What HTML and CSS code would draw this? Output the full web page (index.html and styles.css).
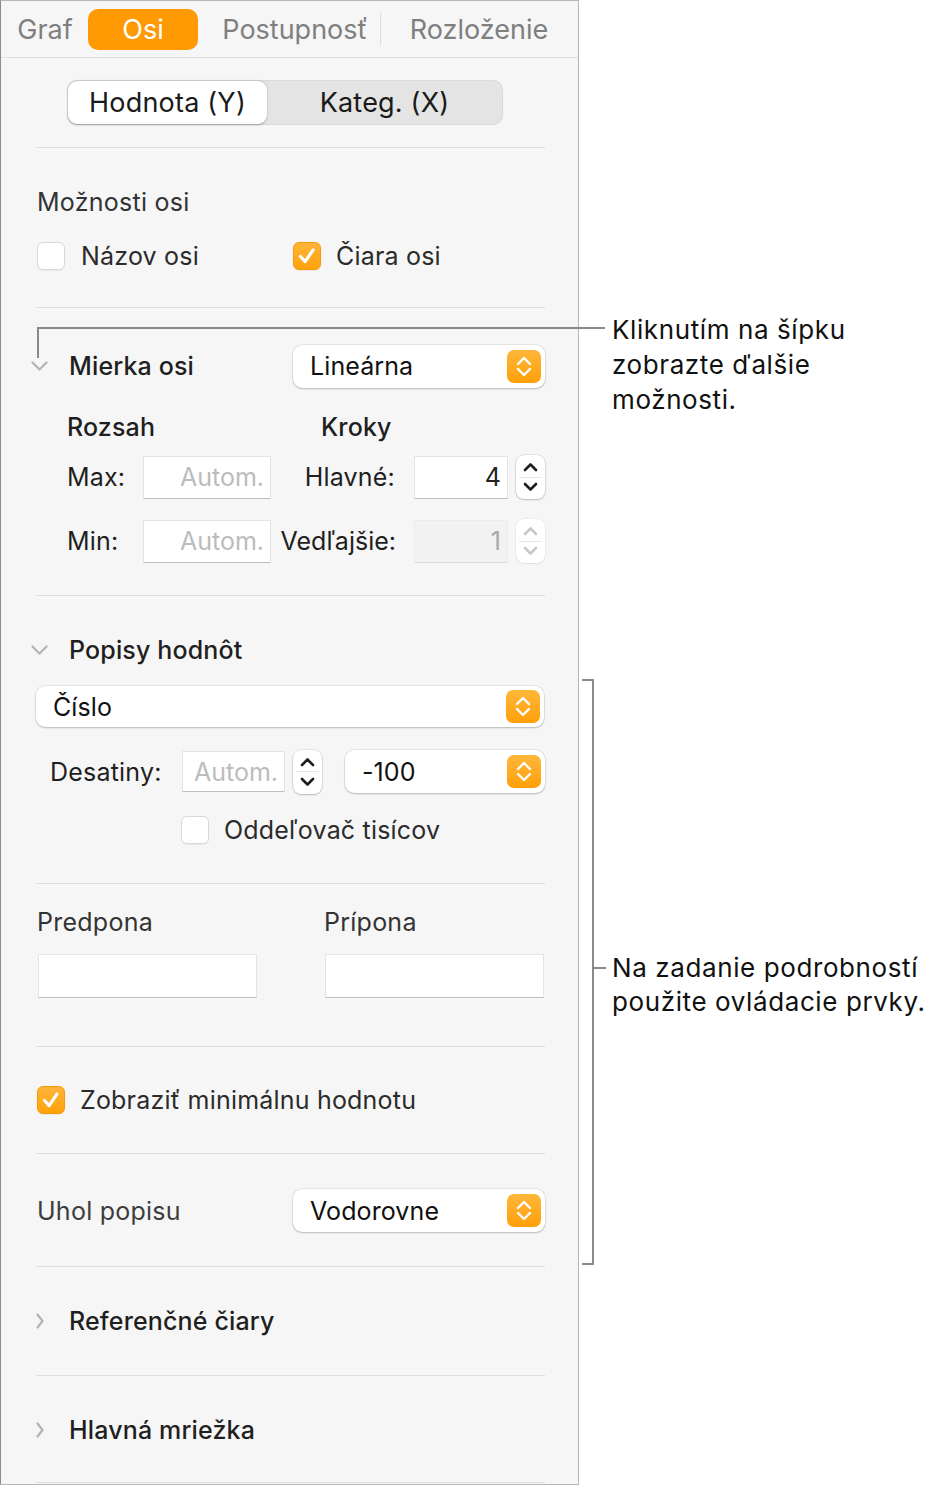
FILE: index.html
```html
<!DOCTYPE html>
<html lang="sk">
<head>
<meta charset="utf-8">
<title>Osi</title>
<link rel="stylesheet" href="styles.css">
</head>
<body>
<div class="page">
  <div class="panel">
    <div class="tabs">
      <div class="tab tab-graf">Graf</div>
      <div class="tab tab-osi active">Osi</div>
      <div class="tab tab-post">Postupnosť</div>
      <div class="tab-sep"></div>
      <div class="tab tab-rozl">Rozloženie</div>
    </div>

    <div class="segmented">
      <div class="seg seg-on">Hodnota (Y)</div>
      <div class="seg seg-off">Kateg. (X)</div>
    </div>

    <div class="content">
      <div class="sep"></div>

      <section class="sec sec-a">
        <div class="row h40 label-reg">Možnosti osi</div>
        <div class="row h40 cb-row">
          <div class="cb-item cb-w1"><span class="cb"></span><span class="cb-label">Názov osi</span></div>
          <div class="cb-item"><span class="cb on"><svg viewBox="0 0 28 28"><path d="M7 14.5 L12 20 L20.5 7.5" /></svg></span><span class="cb-label cb-label2">Čiara osi</span></div>
        </div>
      </section>
      <div class="sep"></div>

      <section class="sec sec-b">
        <div class="row h44">
          <span class="disc"><svg class="chev-down" viewBox="0 0 17 10"><path d="M1.5 1.5 L8.5 8.5 L15.5 1.5"/></svg></span>
          <span class="label-bold">Mierka osi</span>
          <div class="popup popup-252"><span>Lineárna</span><span class="pop-arrow"><svg viewBox="0 0 34 33"><path d="M11 14 L17 8 L23 14 M11 19 L17 25 L23 19"/></svg></span></div>
        </div>
        <div class="row h30 sub-heads">
          <span class="label-bold head-rozsah">Rozsah</span>
          <span class="label-bold">Kroky</span>
        </div>
        <div class="num-grid row-max">
          <span class="lbl">Max:</span>
          <div class="field"><span class="ph">Autom.</span></div>
          <span class="lbl lbl-r">Hlavné:</span>
          <div class="field"><span>4</span></div>
          <span class="stepper"><svg viewBox="0 0 29 44"><path d="M9 15 L14.5 9.5 L20 15 M9 29 L14.5 34.5 L20 29"/></svg></span>
        </div>
        <div class="num-grid row-min">
          <span class="lbl">Min:</span>
          <div class="field"><span class="ph">Autom.</span></div>
          <span class="lbl lbl-r">Vedľajšie:</span>
          <div class="field field-dis"><span>1</span></div>
          <span class="stepper stepper-dis"><svg viewBox="0 0 29 44"><path d="M9 15 L14.5 9.5 L20 15 M9 29 L14.5 34.5 L20 29"/></svg></span>
        </div>
      </section>
      <div class="sep"></div>

      <section class="sec sec-c">
        <div class="row h30">
          <span class="disc"><svg class="chev-down" viewBox="0 0 17 10"><path d="M1.5 1.5 L8.5 8.5 L15.5 1.5"/></svg></span>
          <span class="label-bold">Popisy hodnôt</span>
        </div>
        <div class="popup popup-full"><span>Číslo</span><span class="pop-arrow"><svg viewBox="0 0 34 33"><path d="M11 14 L17 8 L23 14 M11 19 L17 25 L23 19"/></svg></span></div>
        <div class="row dec-row">
          <span class="lbl dec-lbl">Desatiny:</span>
          <div class="field dec-field"><span class="ph">Autom.</span></div>
          <span class="stepper"><svg viewBox="0 0 29 44"><path d="M9 15 L14.5 9.5 L20 15 M9 29 L14.5 34.5 L20 29"/></svg></span>
          <div class="popup popup-200"><span>-100</span><span class="pop-arrow"><svg viewBox="0 0 34 33"><path d="M11 14 L17 8 L23 14 M11 19 L17 25 L23 19"/></svg></span></div>
        </div>
        <div class="row h30 sep-row">
          <span class="cb"></span><span class="cb-label">Oddeľovač tisícov</span>
        </div>
      </section>
      <div class="sep"></div>

      <section class="sec sec-d">
        <div class="pre-grid">
          <span class="label-reg">Predpona</span>
          <span class="label-reg">Prípona</span>
          <div class="field field-wide"></div>
          <div class="field field-wide"></div>
        </div>
      </section>
      <div class="sep"></div>

      <section class="sec sec-e">
        <div class="row h30">
          <span class="cb on"><svg viewBox="0 0 28 28"><path d="M7 14.5 L12 20 L20.5 7.5" /></svg></span><span class="cb-label cb-label3">Zobraziť minimálnu hodnotu</span>
        </div>
      </section>
      <div class="sep"></div>

      <section class="sec sec-f">
        <div class="row h43">
          <span class="label-reg label-uhol">Uhol popisu</span>
          <div class="popup popup-252"><span>Vodorovne</span><span class="pop-arrow"><svg viewBox="0 0 34 33"><path d="M11 14 L17 8 L23 14 M11 19 L17 25 L23 19"/></svg></span></div>
        </div>
      </section>
      <div class="sep"></div>

      <section class="sec sec-g">
        <div class="row h30">
          <span class="disc"><svg class="chev-right" viewBox="0 0 8 16"><path d="M1.5 1.5 L6.5 8 L1.5 14.5"/></svg></span>
          <span class="label-bold">Referenčné čiary</span>
        </div>
      </section>
      <div class="sep"></div>

      <section class="sec sec-h">
        <div class="row h30">
          <span class="disc"><svg class="chev-right" viewBox="0 0 8 16"><path d="M1.5 1.5 L6.5 8 L1.5 14.5"/></svg></span>
          <span class="label-bold">Hlavná mriežka</span>
        </div>
      </section>
      <div class="sep"></div>
    </div>
  </div>

  <div class="callout-line c1-h"></div>
  <div class="callout-line c1-v"></div>
  <div class="callout-text c1-text">Kliknutím na šípku<br>zobrazte ďalšie<br>možnosti.</div>

  <div class="callout-line br-v"></div>
  <div class="callout-line br-top"></div>
  <div class="callout-line br-bot"></div>
  <div class="callout-line br-mid"></div>
  <div class="callout-text c2-text">Na zadanie podrobností<br>použite ovládacie prvky.</div>
</div>
</body>
</html>
```

FILE: styles.css
```css
* { box-sizing: border-box; }
html, body { margin: 0; padding: 0; background: #ffffff; }
body {
  font-family: Inter, "Liberation Sans", sans-serif;
  color: #262626;
  width: 937px;
  height: 1485px;
  overflow: hidden;
}
.page { position: relative; width: 937px; height: 1485px; }

.panel {
  width: 579px;
  height: 1485px;
  background: #f6f6f6;
  border-left: 1px solid #8c8c8c;
  border-right: 1px solid #b8b8b8;
  border-top: 1px solid #b8b8b8;
  border-bottom: 1px solid #b8b8b8;
}

/* tabs */
.tabs {
  height: 57px;
  border-bottom: 1px solid #dedede;
  display: flex;
  align-items: center;
  padding-left: 7px;
}
.tab {
  font-size: 27px;
  color: #7f7f7f;
  text-align: center;
  line-height: 41px;
  height: 41px;
}
.tab-graf { width: 74px; }
.tab-osi { width: 110px; margin-left: 6px; }
.tab-post { width: 170px; margin-left: 12px; }
.tab-rozl { width: 196px; }
.tab.active {
  background: #ff9a05;
  color: #ffffff;
  border-radius: 10px;
}
.tab-sep { width: 1px; height: 32px; background: #dddddd; }

/* segmented control */
.segmented {
  margin: 22px 0 0 66px;
  width: 436px;
  height: 45px;
  background: #e4e4e4;
  border-radius: 10px;
  display: flex;
  padding: 1px;
  box-shadow: inset 0 0 0 1px #dadada;
}
.seg {
  font-size: 27px;
  letter-spacing: 0.2px;
  line-height: 43px;
  text-align: center;
  color: #1a1a1a;
}
.seg-on {
  width: 199px;
  background: #ffffff;
  border-radius: 9px;
  box-shadow: 0 0.5px 2px rgba(0,0,0,0.3);
}
.seg-off { flex: 1; }

/* content */
.content { padding: 22px 33px 0 35px; }
.sep { height: 1px; background: #dddddd; }

.row { display: flex; align-items: center; }
.h30 { height: 30px; }
.h40 { height: 40px; }
.h43 { height: 43px; }
.h44 { height: 44px; }

.label-reg { font-size: 25px; letter-spacing: 0.25px; color: #333333; }
.label-bold { font-size: 25px; letter-spacing: 0.15px; font-weight: 500; color: #1f1f1f; }
.lbl { font-size: 25px; letter-spacing: 0.2px; color: #1f1f1f; }

.sec-a { padding: 34px 0 31px 0; }
.sec-a .row + .row { margin-top: 14px; }
.label-reg.h40 { padding-left: 1px; }

.cb-row { padding-left: 1px; }
.cb-item { display: flex; align-items: center; }
.cb-w1 { width: 256px; }
.cb {
  width: 28px; height: 28px;
  border-radius: 6px;
  background: #ffffff;
  border: 1px solid #d9d9d9;
  box-shadow: 0 0.5px 1px rgba(0,0,0,0.06);
  display: inline-flex;
  align-items: center;
  justify-content: center;
  flex: none;
}
.cb.on {
  background: linear-gradient(#ffb43a, #ffa20a);
  border: 1px solid #f59a00;
}
.cb svg { width: 28px; height: 28px; }
.cb svg path { fill: none; stroke: #ffffff; stroke-width: 3.4; stroke-linecap: round; stroke-linejoin: round; }
.cb-label { font-size: 25px; letter-spacing: 0.2px; color: #2b2b2b; margin-left: 16px; }
.cb-label2 { margin-left: 15px; }
.cb-label3 { margin-left: 15px; }

/* disclosure */
.disc {
  width: 17px;
  margin-left: -5px;
  margin-right: 21px;
  display: inline-flex;
  justify-content: center;
  align-items: center;
}
.chev-down { width: 17px; height: 10px; }
.chev-right { width: 8px; height: 16px; }
.disc path { fill: none; stroke: #b4b4b4; stroke-width: 2.2; stroke-linecap: round; stroke-linejoin: round; }

/* popup */
.popup {
  height: 43px;
  background: #ffffff;
  border-radius: 9px;
  box-shadow: 0 0 0 0.5px rgba(0,0,0,0.12), 0 1px 2px rgba(0,0,0,0.2);
  display: flex;
  align-items: center;
  justify-content: space-between;
  padding: 0 4px 0 17px;
  font-size: 25px;
  letter-spacing: 0.1px;
  color: #111111;
}
.popup-252 { width: 252px; margin-left: auto; }
.popup-200 { width: 200px; margin-left: auto; }
.popup-full { width: 508px; height: 41px; margin-top: 21px; }
.pop-arrow {
  width: 34px; height: 33px;
  border-radius: 7px;
  background: linear-gradient(#ffb73a, #ffa00a);
  display: inline-flex;
}
.pop-arrow svg { width: 34px; height: 33px; }
.pop-arrow path { fill: none; stroke: #ffffff; stroke-width: 2.4; stroke-linecap: round; stroke-linejoin: round; }

/* section b */
.sec-b { padding: 36px 0 33px 0; }
.sub-heads { margin-top: 24px; padding-left: 31px; }
.head-rozsah { width: 254px; }
.num-grid {
  display: grid;
  grid-template-columns: 76px 128px 143px 94px 37px;
  align-items: center;
  margin-left: 31px;
  height: 43px;
}
.num-grid .stepper { margin-left: 8px; }
.row-max { margin-top: 13px; }
.row-min { margin-top: 21px; }
.lbl-r { text-align: right; padding-right: 19px; }
.row-min .lbl-r { padding-right: 18px; letter-spacing: 0; }

.field {
  height: 43px;
  background: #ffffff;
  border: 1px solid #e4e4e4;
  border-bottom: 1px solid #bdbdbd;
  display: flex;
  align-items: center;
  justify-content: flex-end;
  padding-right: 6px;
  font-size: 25px;
  color: #222222;
}
.field .ph { color: #bcbcbc; }
.field-dis { background: #f2f2f2; border-color: #ececec; border-bottom-color: #dddddd; }
.field-dis span { color: #a8a8a8; }

.stepper {
  width: 29px; height: 44px;
  background: #ffffff;
  border-radius: 8px;
  box-shadow: 0 0 0 0.5px rgba(0,0,0,0.15), 0 1px 2px rgba(0,0,0,0.18);
  display: inline-flex;
  position: relative;
}
.stepper::after {
  content: "";
  position: absolute;
  left: 3px; right: 3px; top: 21.5px;
  height: 1px;
  background: #e6e6e6;
}
.stepper svg { width: 29px; height: 44px; }
.stepper path { fill: none; stroke: #1e1e1e; stroke-width: 2.6; stroke-linecap: round; stroke-linejoin: round; }
.stepper-dis { box-shadow: 0 0 0 0.5px rgba(0,0,0,0.08), 0 1px 1px rgba(0,0,0,0.06); }
.stepper-dis path { stroke: #c8c8c8; }

/* section c */
.sec-c { padding: 39px 0 38px 0; }
.dec-row { margin-top: 23px; height: 43px; }
.dec-lbl { margin-left: 14px; width: 132px; }
.dec-field { width: 103px; height: 41px; }
.dec-row .stepper { margin-left: 8px; }
.sep-row { margin-top: 22px; padding-left: 145px; }
.sep-row .cb-label { margin-left: 15px; }

/* section d */
.sec-d { padding: 23px 0 48px 0; }
.pre-grid {
  display: grid;
  grid-template-columns: 287px 221px;
  grid-template-rows: 30px 44px;
  row-gap: 17px;
  align-items: center;
}
.pre-grid .label-reg { padding-left: 1px; }
.field-wide { width: 219px; height: 44px; margin-left: 2px; }

/* section e */
.sec-e { padding: 38px 0 38px 0; }
.sec-e .row { padding-left: 1px; }

/* section f */
.sec-f { padding: 35px 0 34px 0; }
.label-uhol { padding-left: 1px; color: #3d3d3d; }

/* sections g h */
.sec-g { padding: 39px 0 39px 0; }
.sec-h { padding: 39px 0 37px 0; }

/* callouts */
.callout-line { position: absolute; background: #8a8a8a; }
.c1-h { left: 37px; top: 327px; width: 568px; height: 2px; }
.c1-v { left: 37px; top: 327px; width: 2px; height: 31px; }
.br-v { left: 592px; top: 679px; width: 2px; height: 586px; }
.br-top { left: 582px; top: 679px; width: 12px; height: 2px; }
.br-bot { left: 582px; top: 1263px; width: 12px; height: 2px; }
.br-mid { left: 594px; top: 967px; width: 12px; height: 2px; }
.callout-text {
  position: absolute;
  left: 612px;
  font-size: 26px;
  letter-spacing: 0.6px;
  line-height: 35px;
  color: #111111;
  white-space: nowrap;
}
.c1-text { top: 312px; }
.c2-text { top: 951px; line-height: 34px; }
```
